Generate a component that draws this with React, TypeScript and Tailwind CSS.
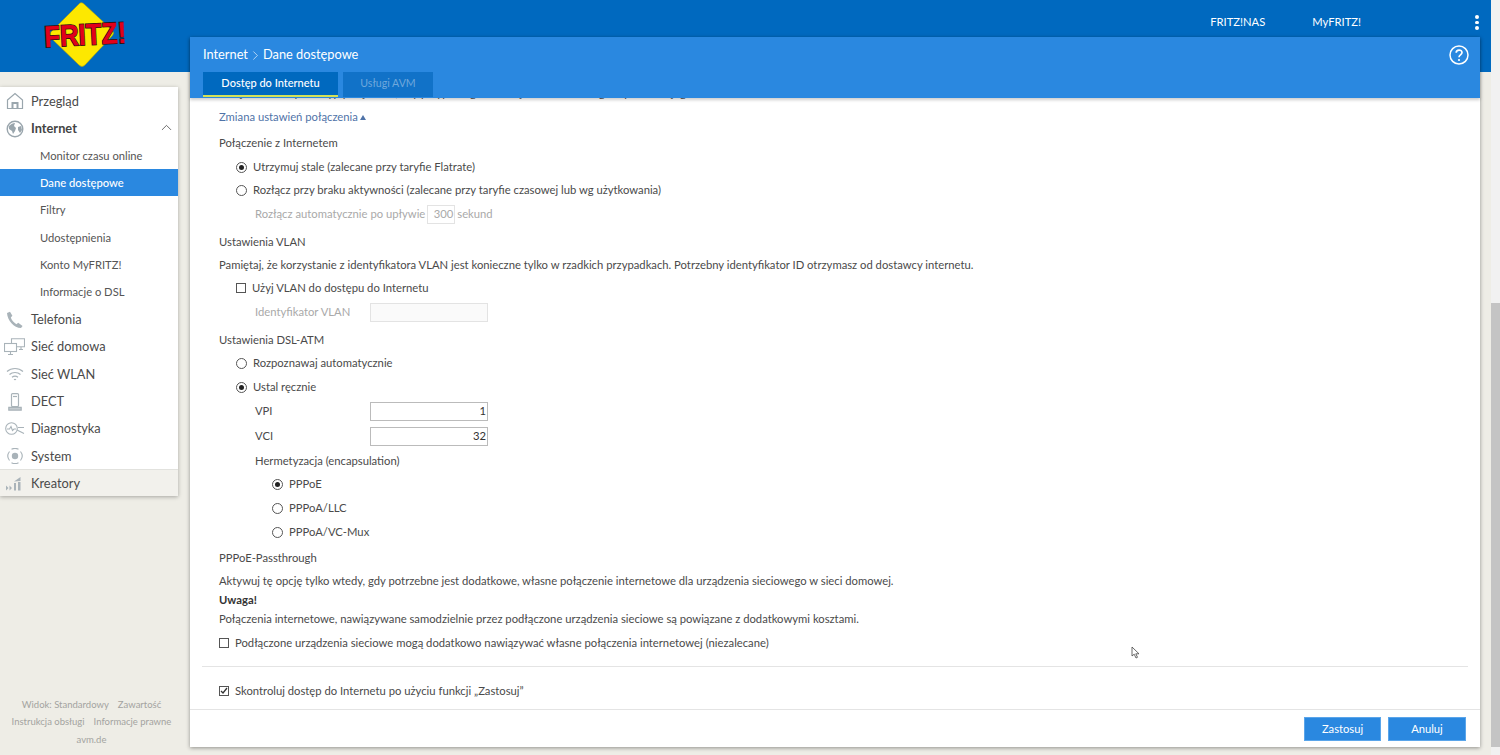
import React from 'react';
import { ChevronUp, ChevronRight } from 'lucide-react';

const FONT = 'font-["Lato","Open_Sans",sans-serif]';

function Logo() {
  return (
    <svg width="95" height="72" viewBox="0 0 95 72" className="block overflow-visible">
      <path d="M41 3 Q43 2 45 4 L73 30 Q76 33 73 36 L46 65 Q43 68 40 65 L12 38 Q9 35 12 32 Z" fill="#fde800" stroke="#b9a400" strokeWidth="0.6" />
      <text
        x="46"
        y="45"
        textAnchor="middle"
        textLength="82"
        lengthAdjust="spacingAndGlyphs"
        fontFamily="Liberation Sans"
        fontWeight="700"
        fontSize="30"
        fill="#e2001a"
        stroke="#2a1010"
        strokeWidth="1.6"
        paintOrder="stroke"
        transform="rotate(-3 46 34)"
      >
        FRITZ!
      </text>
    </svg>
  );
}

function HomeIcon() {
  return (
    <svg width="18" height="18" viewBox="0 0 18 18" fill="none" stroke="#9aa6ad" strokeWidth="1.2">
      <path d="M1.5 8 9 1.5 16.5 8v8.5h-15Z" />
      <path d="M6.5 16V11h5v5" strokeWidth="2" />
    </svg>
  );
}

function GlobeIcon() {
  return (
    <svg width="18" height="18" viewBox="0 0 18 18">
      <circle cx="9" cy="9" r="7.8" fill="#fff" stroke="#9aa6ad" strokeWidth="1.4" />
      <path d="M3 6c2-2 4-3 6-3l-1 3 2 2-1 3-2 3-1-3-3-2Zm9 1 3-1 1 4-2 3-2-3Z" fill="#9aa6ad" />
    </svg>
  );
}

function PhoneIcon() {
  return (
    <svg width="18" height="18" viewBox="0 0 18 18">
      <path d="M1 2 4 0.8l2.4 4-1.6 1.8c.8 2.6 3 5.2 5.6 6.6l1.8-1.4 4.4 3.2-1.6 2C8 17 1.4 9.6 1 2Z" fill="#a9b3b9" />
    </svg>
  );
}

function NetIcon() {
  return (
    <svg width="21" height="18" viewBox="0 0 21 18" fill="none" stroke="#a9b3b9" strokeWidth="1.1">
      <rect x="0.5" y="5.5" width="12" height="8" fill="#fff" />
      <path d="M4 16.5h5M6.5 13.5v3" />
      <path d="M7.5 5V0.8h13v8h-7.5M15 11.5h4M17 9v2.5" />
    </svg>
  );
}

function WifiIcon() {
  return (
    <svg width="18" height="14" viewBox="0 0 18 14" fill="none" stroke="#a9b3b9" strokeWidth="1.2">
      <path d="M1 4.5c4.5-4 11.5-4 16 0M3.5 7.5c3-2.7 8-2.7 11 0M6 10.3c1.7-1.4 4.3-1.4 6 0M8 12.8c.6-.4 1.4-.4 2 0" />
    </svg>
  );
}

function DectIcon() {
  return (
    <svg width="14" height="18" viewBox="0 0 14 18" fill="none" stroke="#a9b3b9" strokeWidth="1.2">
      <rect x="3.5" y="0.6" width="7" height="13" rx="1" />
      <path d="M5 3.5h4" />
      <path d="M0.8 17.2v-2.8h12.4v2.8Z" fill="#c4cbcf" />
    </svg>
  );
}

function DiagIcon() {
  return (
    <svg width="20" height="14" viewBox="0 0 20 14" fill="none" stroke="#a9b3b9" strokeWidth="1.1">
      <circle cx="6.5" cy="6.5" r="5.8" />
      <path d="M2 7h2.5L6 4.5l1.5 4L9 7h2M12 8l7 3.5M13 5.5h6" />
    </svg>
  );
}

function SystemIcon() {
  return (
    <svg width="16" height="16" viewBox="0 0 16 16" fill="none" stroke="#a9b3b9" strokeWidth="1.1">
      <path d="M2.5 3.5a7.3 7.3 0 0 0 0 9M13.5 3.5a7.3 7.3 0 0 1 0 9M4.5 1.3a7.3 7.3 0 0 1 7 0M4.5 14.7a7.3 7.3 0 0 0 7 0" />
      <circle cx="8" cy="8" r="3.2" fill="#a9b3b9" stroke="none" />
    </svg>
  );
}

function WizardIcon() {
  return (
    <svg width="16" height="14" viewBox="0 0 16 14" fill="#a9b3b9">
      <path d="M0 8.5 2.5 11 0 13.5ZM3.5 8.5 6 11l-2.5 2.5ZM8 6h2v7.5H8ZM12 5h2.5v8.5H12ZM8 4.5 14.5 0v4Z" />
    </svg>
  );
}

function Radio({ on }: { on?: boolean }) {
  return (
    <span className="w-[11px] h-[11px] rounded-full border border-[#555] bg-white flex items-center justify-center shrink-0">
      {on && <span className="w-[5px] h-[5px] rounded-full bg-[#222]" />}
    </span>
  );
}

function Check({ on }: { on?: boolean }) {
  return (
    <span className="w-[10px] h-[10px] border border-[#555] bg-white flex items-center justify-center shrink-0">
      {on && (
        <svg width="8" height="8" viewBox="0 0 8 8" fill="none" stroke="#333" strokeWidth="1.3">
          <path d="M1 4l2 2 4-5" />
        </svg>
      )}
    </span>
  );
}

const SUB = ['Monitor czasu online', 'Dane dostępowe', 'Filtry', 'Udostępnienia', 'Konto MyFRITZ!', 'Informacje o DSL'];
const MENU_BOTTOM = [
  { label: 'Telefonia', icon: <PhoneIcon /> },
  { label: 'Sieć domowa', icon: <NetIcon /> },
  { label: 'Sieć WLAN', icon: <WifiIcon /> },
  { label: 'DECT', icon: <DectIcon /> },
  { label: 'Diagnostyka', icon: <DiagIcon /> },
  { label: 'System', icon: <SystemIcon /> },
];

function MenuItem({ label, icon, bold }: { label: string; icon: React.ReactNode; bold?: boolean }) {
  return (
    <div className="h-[27.3px] pt-[1.5px] flex items-center relative">
      <span className="w-[31px] flex justify-center pl-[1px] pr-[3px] shrink-0">{icon}</span>
      <span className={`text-[12.8px] ${bold ? 'font-bold text-[#444]' : 'text-[#4a4a4a]'}`}>{label}</span>
    </div>
  );
}

function Row({ className = '', children }: { className?: string; children: React.ReactNode }) {
  return <div className={`h-[18px] shrink-0 flex items-center whitespace-nowrap ${className}`}>{children}</div>;
}

export default function App() {
  return (
    <div className={`${FONT} relative w-[1500px] h-[755px] overflow-hidden flex bg-[#eeede6] text-[11.25px] text-[#4a4a4a]`}>
      <div className="w-[1491px] shrink-0 flex flex-col">
        {/* Top bar */}
        <header className="h-[72px] shrink-0 bg-[#0069bf] flex justify-between pl-[39px]">
          <Logo />
          <div className="flex items-start text-white text-[11.2px] pt-[14px] pr-[12px]">
            <span className="mr-[47px]">FRITZ!NAS</span>
            <span className="mr-[114px]">MyFRITZ!</span>
            <span className="flex flex-col gap-[2px] pt-[1px]">
              <span className="w-[4px] h-[3.5px] rounded-full bg-white" />
              <span className="w-[4px] h-[3.5px] rounded-full bg-white" />
              <span className="w-[4px] h-[3.5px] rounded-full bg-white" />
            </span>
          </div>
        </header>

        <div className="flex flex-1 min-h-0">
          {/* Sidebar */}
          <aside className="w-[190px] shrink-0 flex flex-col justify-between">
            <nav className="w-[178px] mt-[15px] bg-white shadow-[0_1px_4px_rgba(0,0,0,0.3)]">
              <MenuItem label="Przegląd" icon={<HomeIcon />} />
              <div className="relative">
                <MenuItem label="Internet" icon={<GlobeIcon />} bold />
                <ChevronUp size={17} strokeWidth={1} className="absolute right-[3px] top-[5px] text-[#333]" />
              </div>
              {SUB.map(s => (
                <div
                  key={s}
                  className={`h-[27.3px] pt-[2px] flex items-center pl-[40px] text-[11.2px] ${
                    s === 'Dane dostępowe' ? 'bg-[#2a88e0] text-white font-medium' : 'text-[#555]'
                  }`}
                >
                  {s}
                </div>
              ))}
              {MENU_BOTTOM.map(m => (
                <MenuItem key={m.label} {...m} />
              ))}
              <div className="h-[27px] pt-[1px] bg-[#f2f1ec] border-t border-[#e2e2de] flex items-center">
                <span className="w-[31px] flex justify-center pr-[3px] shrink-0">
                  <WizardIcon />
                </span>
                <span className="text-[12.8px] text-[#4a4a4a]">Kreatory</span>
              </div>
            </nav>
            <div className="w-[178px] pl-[5px] pb-[7px] text-[9.5px] leading-[17.5px] text-[#a3a3a0] text-center whitespace-nowrap">
              <div className="flex justify-center gap-[9px]">
                <span>Widok: Standardowy</span>
                <span>Zawartość</span>
              </div>
              <div className="flex justify-center gap-[9px]">
                <span>Instrukcja obsługi</span>
                <span>Informacje prawne</span>
              </div>
              <div>avm.de</div>
            </div>
          </aside>

          {/* Main card */}
          <main className="w-[1290px] h-[710px] -mt-[35px] shrink-0 bg-white shadow-[0_1px_4px_rgba(0,0,0,0.4)] flex flex-col">
            <div className="h-[61px] shrink-0 bg-[#2a88e0] relative z-10 shadow-[0_2px_3px_rgba(0,0,0,0.2)] px-[13px] flex flex-col">
              <div className="h-[35px] pt-[1px] flex items-center text-white text-[12.8px]">
                Internet
                <ChevronRight size={15} strokeWidth={1} />
                Dane dostępowe
              </div>
              <div className="flex gap-[5px]">
                <div className="w-[135px] h-[25px] pb-[1px] bg-[#0069bf] border-b-2 border-[#d4e157] flex items-center justify-center text-white text-[11px] font-medium">
                  Dostęp do Internetu
                </div>
                <div className="w-[90px] h-[25px] pb-[1px] bg-[#1172c8] flex items-center justify-center text-[#6fa8dc] text-[10.6px]">
                  Usługi AVM
                </div>
              </div>
              <svg width="20" height="20" viewBox="0 0 20 20" fill="none" className="absolute right-[11px] top-[8px]">
                <circle cx="10" cy="10" r="9" stroke="#fff" strokeWidth="1.5" />
                <path d="M7.2 7.8c0-3.6 5.8-3.6 5.8-.2 0 2.3-3 2.2-3 4.6" stroke="#fff" strokeWidth="1.7" />
                <circle cx="10" cy="15" r="1.1" fill="#fff" />
              </svg>
            </div>

            <div className="flex-1 min-h-0 px-[29px] flex flex-col overflow-hidden">
              {/* page is scrolled, this line sits mostly under the blue bar */}
              <Row className="-mt-[14px]">Tutaj możesz wybrać typ połączenia, aby przypisać go do urządzenia sieciowego i sprawdzić jego stan.</Row>
              <Row className="mt-[6px] text-[#4f73a8]">
                Zmiana ustawień połączenia
                <span className="ml-[2px] w-0 h-0 border-x-[3px] border-x-transparent border-b-[5px] border-b-[#4f73a8]" />
              </Row>
              <Row className="mt-[8px]">Połączenie z Internetem</Row>
              <Row className="mt-[6px] pl-[17px] gap-[6px]"><Radio on />Utrzymuj stale (zalecane przy taryfie Flatrate)</Row>
              <Row className="mt-[5px] pl-[17px] gap-[6px]"><Radio />Rozłącz przy braku aktywności (zalecane przy taryfie czasowej lub wg użytkowania)</Row>
              <Row className="mt-[6px] pl-[36px] text-[#a9a9a9]">
                Rozłącz automatycznie po upływie
                <span className="w-[28px] h-[19px] mx-[2px] border border-[#e3e3e3] flex items-center justify-end pr-[1px]">300</span>
                sekund
              </Row>
              <Row className="mt-[10px]">Ustawienia VLAN</Row>
              <Row className="mt-[5px]">Pamiętaj, że korzystanie z identyfikatora VLAN jest konieczne tylko w rzadkich przypadkach. Potrzebny identyfikator ID otrzymasz od dostawcy internetu.</Row>
              <Row className="mt-[5px] pl-[17px] gap-[6px]"><Check />Użyj VLAN do dostępu do Internetu</Row>
              <Row className="mt-[6px] pl-[36px] text-[#a9a9a9]">
                <span className="w-[115px]">Identyfikator VLAN</span>
                <span className="w-[118px] h-[19px] border border-[#e3e3e3] bg-[#fafafa]" />
              </Row>
              <Row className="mt-[10px]">Ustawienia DSL-ATM</Row>
              <Row className="mt-[5px] pl-[17px] gap-[6px]"><Radio />Rozpoznawaj automatycznie</Row>
              <Row className="mt-[6px] pl-[17px] gap-[6px]"><Radio on />Ustal ręcznie</Row>
              <Row className="mt-[6px] pl-[36px]">
                <span className="w-[115px]">VPI</span>
                <span className="w-[118px] h-[19px] border border-[#bbb] flex items-center justify-end pr-[1px] text-[#333]">1</span>
              </Row>
              <Row className="mt-[7px] pl-[36px]">
                <span className="w-[115px]">VCI</span>
                <span className="w-[118px] h-[19px] border border-[#bbb] flex items-center justify-end pr-[1px] text-[#333]">32</span>
              </Row>
              <Row className="mt-[7px] pl-[36px]">Hermetyzacja (encapsulation)</Row>
              <Row className="mt-[5px] pl-[53px] gap-[6px]"><Radio on />PPPoE</Row>
              <Row className="mt-[6px] pl-[53px] gap-[6px]"><Radio />PPPoA/LLC</Row>
              <Row className="mt-[6px] pl-[53px] gap-[6px]"><Radio />PPPoA/VC-Mux</Row>
              <Row className="mt-[8px]">PPPoE-Passthrough</Row>
              <Row className="mt-[5px]">Aktywuj tę opcję tylko wtedy, gdy potrzebne jest dodatkowe, własne połączenie internetowe dla urządzenia sieciowego w sieci domowej.</Row>
              <Row className="mt-[1px] font-bold text-[#333]">Uwaga!</Row>
              <Row className="mt-[1px]">Połączenia internetowe, nawiązywane samodzielnie przez podłączone urządzenia sieciowe są powiązane z dodatkowymi kosztami.</Row>
              <Row className="mt-[6px] gap-[6px]"><Check />Podłączone urządzenia sieciowe mogą dodatkowo nawiązywać własne połączenia internetowej (niezalecane)</Row>
            </div>

            <div className="mx-[12px] h-[43px] pt-[6px] shrink-0 border-t border-[#e4e4e4] flex items-center pl-[17px] gap-[6px]">
              <Check on />
              Skontroluj dostęp do Internetu po użyciu funkcji „Zastosuj”
            </div>
            <div className="h-[38px] shrink-0 border-t border-[#e4e4e4] flex justify-end items-start pt-[7px] pr-[14px] gap-[7px]">
              <button className="w-[77px] h-[24px] bg-[#2a88e0] text-white text-[11.2px] border border-[#5aa5ea]">Zastosuj</button>
              <button className="w-[78px] h-[24px] bg-[#2a88e0] text-white text-[11.2px] border border-[#5aa5ea]">Anuluj</button>
            </div>
          </main>
        </div>
      </div>

      {/* Scrollbar */}
      <div className="w-[9px] shrink-0 bg-[#f1f1f1] flex flex-col pt-[303px] pb-[8px]">
        <div className="flex-1 bg-[#c4c4c4]" />
      </div>

      {/* Mouse pointer */}
      <svg width="9" height="13" viewBox="0 0 9 13" className="absolute left-[1131px] top-[646px]" fill="#fff" stroke="#444" strokeWidth="0.8">
        <path d="M1 1v9l2.2-1.8L5 12l1.5-.7-1.7-3.5H8Z" />
      </svg>
    </div>
  );
}
